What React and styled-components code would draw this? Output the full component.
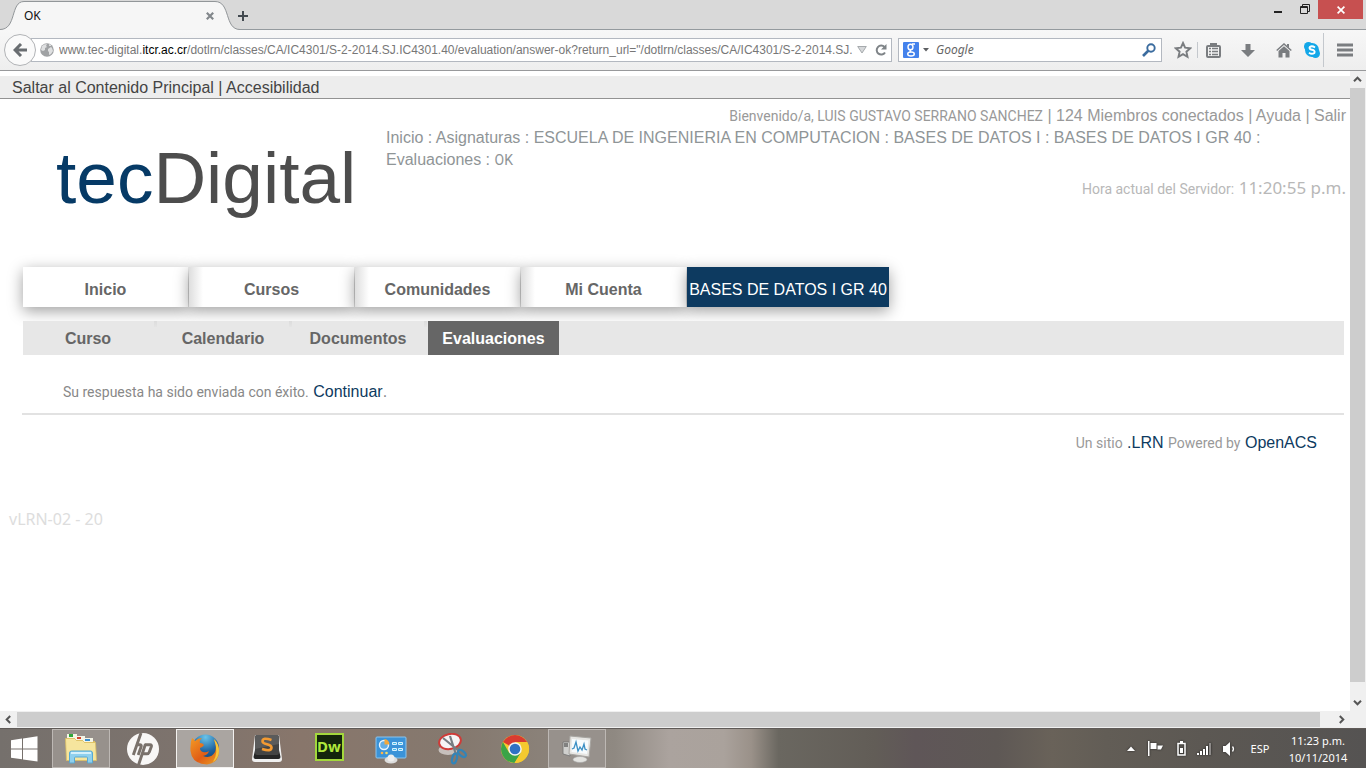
import React, { useState } from 'react';
import styled, { createGlobalStyle } from 'styled-components';

const GlobalStyle = createGlobalStyle`
  * { box-sizing: border-box; }
  html, body, #root { height: 100%; margin: 0; }
  body { overflow: hidden; background: #fff; }
  button { font: inherit; color: inherit; border: 0; padding: 0; margin: 0; background: none; }
  svg { display: block; flex: none; }
`;

const ui = `'Noto Sans', 'Open Sans', sans-serif`;
const arial = `'Liberation Sans', Arial, sans-serif`;
const tahoma = `'Noto Sans', Tahoma, sans-serif`;

const Desktop = styled.div`
  display: flex;
  flex-direction: column;
  height: 100vh;
  font-family: ${arial};
`;

/* ---------- window frame ---------- */
const TitleBar = styled.div`
  display: flex;
  justify-content: space-between;
  height: 30px;
  flex: none;
  background: #d9d9d9;
  border-bottom: 1px solid #949a9e;
`;
const TabStrip = styled.div`
  display: flex;
`;
const Tab = styled.div`
  position: relative;
  width: 240px;
  height: 30px;
  display: flex;
  align-items: center;
  justify-content: space-between;
  padding: 2px 24px 0;
  font: 12px/16px ${ui};
  color: #111;
`;
const TabShape = styled.svg`
  position: absolute;
  inset: 0;
`;
const TabTitle = styled.span`
  position: relative;
`;
const IconButton = styled.button`
  position: relative;
  display: flex;
  align-items: center;
  justify-content: center;
  flex: none;
  width: ${p => p.$w || 24}px;
  height: ${p => p.$h || 24}px;
  color: ${p => p.$color || '#7a7d80'};
`;
const WindowButtons = styled.div`
  display: flex;
  align-items: flex-start;
  padding-right: 3px;
`;
const CloseWindow = styled.button`
  display: flex;
  align-items: center;
  justify-content: center;
  width: 45px;
  height: 19px;
  background: #c75050;
`;

/* ---------- navigation toolbar ---------- */
const Toolbar = styled.div`
  display: flex;
  align-items: center;
  height: 41px;
  flex: none;
  padding: 0 0 0 4px;
  background: linear-gradient(#f7f7f7, #eeeeee);
  border-bottom: 1px solid #98999b;
`;
const BackButton = styled.button`
  position: relative;
  z-index: 1;
  display: flex;
  align-items: center;
  justify-content: center;
  width: 32px;
  height: 32px;
  flex: none;
  border: 1px solid #b1b3b6;
  border-radius: 50%;
  background: #fafafa;
`;
const Field = styled.div`
  display: flex;
  align-items: center;
  height: 24px;
  border: 1px solid #b3b8c0;
  background: #fff;
`;
const UrlField = styled(Field)`
  flex: 1;
  min-width: 0;
  margin-left: -5px;
  margin-right: 6px;
  padding-left: 8px;
`;
const SearchField = styled(Field)`
  width: 264px;
  flex: none;
  padding: 0 4px;
`;
const UrlText = styled.div`
  position: relative;
  flex: 1;
  min-width: 0;
  margin-left: 5px;
  height: 20px;
  font: 12px/20px ${arial};
`;
const UrlInput = styled.input`
  display: block;
  width: 100%;
  height: 20px;
  padding: 0;
  border: 0;
  outline: 0;
  background: transparent;
  font: inherit;
  color: #333;
`;
const UrlDisplay = styled.span`
  position: absolute;
  inset: 0;
  overflow: hidden;
  white-space: nowrap;
  pointer-events: none;
  color: #777;
`;
const UrlHost = styled.span`
  color: #000;
`;
const SearchInput = styled.input`
  flex: 1;
  min-width: 0;
  height: 20px;
  padding: 0 0 0 4px;
  border: 0;
  outline: 0;
  background: transparent;
  font: italic 12px/20px ${ui};
  &::placeholder { color: #666; opacity: 1; }
`;
const ToolGroup = styled.div`
  display: flex;
  align-items: center;
  height: 40px;
  flex: none;
  padding-left: 7px;
`;
const ToolDivider = styled.span`
  width: 1px;
  height: ${p => (p.$tall ? 34 : 16)}px;
  background: #c4c8cd;
`;

/* ---------- scrolling viewport ---------- */
const Viewport = styled.div`
  flex: 1;
  min-height: 0;
  display: grid;
  grid-template-columns: minmax(0, 1fr) 16px;
  grid-template-rows: minmax(0, 1fr) 17px;
`;
const Page = styled.div`
  overflow: hidden;
  background: #fff;
  padding-top: 5px;
`;
const ScrollBar = styled.div`
  display: flex;
  flex-direction: ${p => (p.$vertical ? 'column' : 'row')};
  background: #f0f0f0;
  padding: ${p => (p.$vertical ? '0 1px 0 0' : '1px 0')};
`;
const ScrollArrow = styled.button`
  display: flex;
  align-items: center;
  justify-content: center;
  width: ${p => (p.$vertical ? 15 : 17)}px;
  height: ${p => (p.$vertical ? 17 : 15)}px;
  flex: none;
`;
const ScrollTrack = styled.div`
  flex: 1;
  display: flex;
  flex-direction: ${p => (p.$vertical ? 'column' : 'row')};
`;
const ScrollThumb = styled.div`
  flex: 0 0 ${p => p.$size};
  background: #cdcdcd;
`;
const ScrollCorner = styled.div`
  background: #f0f0f0;
`;

/* ---------- web page ---------- */
const Skip = styled.nav`
  height: 23px;
  padding: 1px 0 0 12px;
  background: #ededed;
  border-bottom: 1px solid #929292;
  font: 16px/22px ${arial};
  color: #444;
`;
const PlainLink = styled.a`
  color: inherit;
  text-decoration: none;
`;
const BlueLink = styled.a`
  color: #0d3a60;
  text-decoration: none;
  font: 16px/22px ${arial};
`;
const Small = styled.span`
  font-family: Roboto, ${tahoma};
  font-size: 14px;
`;
const Header = styled.header`
  display: grid;
  grid-template-columns: 386px minmax(0, 1fr);
  height: 168px;
  padding-top: 6px;
  color: #999;
  font: 16px/22px ${arial};
`;
const Logo = styled.div`
  padding: 14px 0 0 56px;
  font: 73px/118px ${arial};
  white-space: nowrap;
  color: #4d4d4d;
`;
const LogoAccent = styled.span`
  color: #063a66;
`;
const HeaderText = styled.div`
  padding-right: 4px;
`;
const UserLine = styled.div`
  text-align: right;
  white-space: nowrap;
`;
const Crumbs = styled.nav`
  color: #8f9597;
  padding-right: 60px;
`;
const ServerTime = styled.div`
  margin-top: 6px;
  text-align: right;
  color: #b8b8b8;
`;
const Clock = styled.span`
  font: 17px/22px ${tahoma};
`;
const MainNav = styled.nav`
  display: flex;
  margin-left: 23px;
  gap: 1px;
`;
const NavItem = styled.a`
  display: flex;
  align-items: center;
  justify-content: center;
  min-width: ${p => (p.$active ? 202 : 165)}px;
  height: 40px;
  padding-top: 6px;
  background: ${p => (p.$active ? '#0d3a60' : p.$first ? '#fff' : 'linear-gradient(90deg, #dedede, #fff 14px)')};
  color: ${p => (p.$active ? '#fff' : '#666')};
  font: ${p => (p.$active ? 'normal' : 'bold')} 16px/22px ${arial};
  text-decoration: none;
  white-space: nowrap;
  box-shadow: 0 4px 15px rgba(0, 0, 0, 0.38);
`;
const SubNav = styled.nav`
  position: relative;
  display: flex;
  height: 34px;
  margin: 14px 6px 0 23px;
  background: #e7e7e7;
`;
const SubItem = styled.a`
  display: flex;
  align-items: center;
  justify-content: center;
  width: ${p => (p.$active ? 131 : 135)}px;
  padding-top: 2px;
  padding-right: ${p => (p.$active ? 0 : 5)}px;
  background: ${p => (p.$active ? '#666' : 'linear-gradient(#dcdcdc, #e4e4e4) right 1px top / 3px 6px no-repeat')};
  color: ${p => (p.$active ? '#fff' : '#666')};
  font: bold 16px/22px ${arial};
  text-decoration: none;
`;
const Content = styled.main`
  margin: 0 6px 0 22px;
  padding: 26px 0 10px 41px;
  border-bottom: 2px solid #e2e2e2;
  color: #888;
  line-height: 22px;
`;
const Footer = styled.footer`
  padding: 17px 33px 0 0;
  text-align: right;
  color: #999;
  line-height: 22px;
`;
const Version = styled.div`
  margin-top: 54px;
  padding-left: 9px;
  font: 16px/22px ${tahoma};
  color: #ddd;
`;

/* ---------- taskbar ---------- */
const Taskbar = styled.div`
  display: flex;
  align-items: stretch;
  justify-content: space-between;
  height: 40px;
  flex: none;
  border-top: 1px solid #5f5a57;
  background: linear-gradient(90deg, #75706c 0%, #7d736d 13%, #88766b 22%, #85796f 34%, #8f8982 45%, #aba39e 49%, #aaa29c 53%, #9a9189 55%, #6a6760 57%, #625d57 64%, #5f5658 67%, #5e5855 73%, #696259 77%, #625d56 81%, #5c5853 88%, #555352 100%);
  color: #fff;
`;
const Apps = styled.div`
  display: flex;
  gap: 4px;
`;
const AppButton = styled.button`
  display: flex;
  align-items: center;
  justify-content: center;
  width: ${p => (p.$start ? 48 : 58)}px;
  height: 39px;
  border: 1px solid ${p => (p.$state === 'active' ? '#f3f1ef' : p.$state === 'open' ? '#bdb8b4' : 'transparent')};
  background: ${p => (p.$state === 'active' ? '#aaa5a1' : p.$state === 'open' ? '#97918c' : 'transparent')};
`;
const Tray = styled.div`
  display: flex;
  align-items: center;
  padding-right: 18px;
  font: 11px/17px ${ui};
  svg { filter: drop-shadow(0 0 1px #222); }
`;
const Lang = styled.button`
  width: 32px;
  margin-right: 12px;
`;
const DateTime = styled.div`
  width: 60px;
  text-align: center;
  white-space: nowrap;
`;

const Chevron = ({ turn }) => (
  <svg width="9" height="9" viewBox="0 0 9 9">
    <path d="M1 6.2 4.5 2.7 8 6.2" fill="none" stroke="#555" strokeWidth="2" transform={`rotate(${turn} 4.5 4.5)`} />
  </svg>
);

const StartIcon = () => (
  <svg width="28" height="26" viewBox="0 0 28 26" fill="#fff">
    <path d="M1 4.2 12 2.6V12.400H1zM13 2.400 27.500.3V12.400H13zM1 13.400H12V23.200L1 21.700zM13 13.400H27.500V25.500L13 23.400z" />
  </svg>
);
const ExplorerIcon = () => (
  <svg width="34" height="32" viewBox="0 0 34 32">
    <path d="M3 2h9l1 3h8l1 3h9v19H3z" fill="#ddbd62" />
    <path d="M3 1h10v4H3z" fill="#f5f5e6" /><path d="M5 1h4v3H5z" fill="#2fa73a" />
    <path d="M11 3h10v4H11z" fill="#f5f5e6" /><path d="M13 4h4v2h-4z" fill="#d2452d" />
    <path d="M19 5h10v4H19z" fill="#f5f5e6" /><path d="M21 6h5v2h-5z" fill="#3a8fd0" />
    <path d="M1.500 5.500h9l2 2h6l2 2h11l1 18h-30z" fill="#f6e59e" stroke="#dcbf62" strokeWidth=".8" />
    <path d="M5.500 30V20q0-2 2-2h19q2 0 2 2v10h-5v-5q0-1-1-1h-11q-1 0-1 1v5z" fill="#8fd0ee" stroke="#58a9d2" />
    <path d="M7 19h20v2H7z" fill="#d4f0fb" />
  </svg>
);
const HpIcon = () => (
  <svg width="32" height="32" viewBox="0 0 32 32">
    <circle cx="16" cy="16" r="16" fill="#f8f7f6" />
    <g fill="none" stroke="#79716b" strokeWidth="2.900">
      <path d="M14 0 6.300 22M9.800 11.700h3q2 0 1.300 2L11.200 22" />
      <path d="M18.500 11 11.500 32M18 11.700h5q2 0 1.300 2L22.300 19q-.7 1.800-2.300 1.800h-4" />
    </g>
  </svg>
);
const FirefoxIcon = () => (
  <svg width="32" height="32" viewBox="0 0 32 32">
    <defs>
      <radialGradient id="ffGlobe" cx=".5" cy=".1" r=".9"><stop offset="0" stopColor="#6ac4ea" /><stop offset=".6" stopColor="#1d62a0" /><stop offset="1" stopColor="#12406f" /></radialGradient>
      <linearGradient id="ffFox" x1="0" y1="0" x2="1" y2="1"><stop offset="0" stopColor="#f39a25" /><stop offset=".55" stopColor="#e05d16" /><stop offset="1" stopColor="#e9a024" /></linearGradient>
    </defs>
    <circle cx="16.500" cy="15" r="13.500" fill="url(#ffGlobe)" />
    <path d="M3 5q2 1 3 3 3-3 7-3-3 2-2 5 3 0 4 2-1 2-4 3 0 3 3 4 3 1 6-1-1 4-6 5 8 3 12-4 2-5-1-13 5 5 5 12 0 12-12 13.500Q3 31 1.500 18 1 10 3 5z" fill="url(#ffFox)" />
    <path d="M25 6q5 5 5 12 0 7-6 11 6-9 1-23z" fill="#f6c63a" />
  </svg>
);
const SublimeIcon = () => (
  <svg width="32" height="30" viewBox="0 0 32 30">
    <path d="M4 1 1 25q0 3 3 3h24q3 0 3-3L28 1z" fill="#f0f0f0" />
    <path d="M4 16 2.500 23q0 2 2 2h23q2 0 2-2L28 16z" fill="#262626" />
    <rect x="4" y="1" width="24" height="20" rx="2" fill="#444" />
    <path d="M4 3q0-2 2-2h20q2 0 2 2v7L4 15z" fill="#5b5b5b" />
    <path d="M20.500 6q-9-3-9 1.200 0 2 4.500 3t4.500 3.300q0 4.500-9.500 1.500" fill="none" stroke="#f39a32" strokeWidth="2.600" />
  </svg>
);
const DwBadge = styled.span`
  display: flex;
  align-items: center;
  justify-content: center;
  width: 29px;
  height: 28px;
  padding-bottom: 2px;
  margin-bottom: 4px;
  border: 2px solid #a3d83c;
  background: #14260c;
  color: #b0e83c;
  font: bold 15px/20px ${ui};
`;
const PanelIcon = () => (
  <svg width="32" height="30" viewBox="0 0 32 30">
    <rect x="1" y="3" width="30" height="21" rx="1" fill="#3b93d8" stroke="#8cc5ee" />
    <circle cx="9" cy="11" r="4.500" fill="#62aee6" stroke="#e8f5ff" strokeWidth="1.400" />
    <path d="M9.500 10.500V5a5.500 5.500 0 0 1 5 5.500z" fill="#f2a83b" />
    <circle cx="7" cy="19" r="1.300" fill="#ffb449" /><circle cx="11.500" cy="19" r="1.300" fill="#f5dc6a" />
    <path d="M17.500 8.500h4v2h-4zM23.500 8.500h4v2h-4zM17.500 14.500h4v2h-4zM23.500 14.500h4v2h-4z" fill="#45bfe9" stroke="#d9f1ff" />
    <ellipse cx="16" cy="26" rx="6.500" ry="3.500" fill="#ddd" /><circle cx="16" cy="24" r="3.500" fill="#eee" />
  </svg>
);
const SnipIcon = () => (
  <svg width="32" height="32" viewBox="0 0 32 32">
    <ellipse cx="11" cy="17" rx="9.500" ry="5" fill="#c7c0bc" />
    <ellipse cx="13" cy="8.500" rx="11" ry="7.500" fill="#f6f4f5" stroke="#cf3b38" strokeWidth="2" transform="rotate(-12 13 8.500)" />
    <path d="M6 5 22 18M13 3 18.500 20" stroke="#777c82" strokeWidth="2.200" />
    <ellipse cx="25" cy="20.500" rx="2.500" ry="4.500" fill="none" stroke="#3284b8" strokeWidth="2.200" transform="rotate(-50 25 20.500)" />
    <ellipse cx="17.500" cy="25.500" rx="2.300" ry="5" fill="none" stroke="#3284b8" strokeWidth="2.200" transform="rotate(14 17.500 25.500)" />
  </svg>
);
const ChromeIcon = () => (
  <svg width="30" height="30" viewBox="0 0 30 30">
    <circle cx="15" cy="15" r="14" fill="#f5c92f" />
    <path d="M15 15 2.900 8A14 14 0 0 1 27.100 8H15z" fill="#d93b30" />
    <path d="M2.900 8A14 14 0 0 0 14.500 29L21 18.500 9 18.500z" fill="#3ba448" />
    <path d="M15 8h12.100A14 14 0 0 1 14.500 29L21 18.500z" fill="#f5c92f" />
    <circle cx="15" cy="15" r="6.800" fill="#f4f4f2" /><circle cx="15" cy="15" r="5.300" fill="#2f71c4" />
  </svg>
);
const MonitorIcon = () => (
  <svg width="32" height="30" viewBox="0 0 32 30">
    <path d="M2 8h7v14l-7-2z" fill="#d0d0ce" stroke="#727272" strokeWidth=".8" /><path d="M3 10h4M3 12h4" stroke="#333" />
    <path d="M9 2 30 4 28 23 8 20z" fill="#e7e6e3" stroke="#a7a5a1" />
    <path d="M11 5 27.500 6.500 26 20 10.500 18z" fill="#f7fbfd" />
    <path d="m11 15 2-1 2-6 2 9 2-4 2 3 2-6 1 5 2 1" fill="none" stroke="#3b8fc4" strokeWidth="1.300" />
    <ellipse cx="19" cy="25.500" rx="7" ry="3" fill="#e3e3e0" stroke="#aaa" strokeWidth=".6" />
  </svg>
);

const apps = [
  { name: 'Explorador', icon: ExplorerIcon, state: 'open' },
  { name: 'HP', icon: HpIcon },
  { name: 'Firefox', icon: FirefoxIcon, state: 'active' },
  { name: 'Sublime Text', icon: SublimeIcon },
  { name: 'Dreamweaver', icon: () => <DwBadge>Dw</DwBadge> },
  { name: 'Panel de control', icon: PanelIcon },
  { name: 'Recortes', icon: SnipIcon },
  { name: 'Chrome', icon: ChromeIcon },
  { name: 'Administrador de tareas', icon: MonitorIcon, state: 'open' },
];

const host = 'itcr.ac.cr';
const before = 'www.tec-digital.';
const after = '/dotlrn/classes/CA/IC4301/S-2-2014.SJ.IC4301.40/evaluation/answer-ok?return_url="/dotlrn/classes/CA/IC4301/S-2-2014.SJ.IC';

function AddressBar() {
  const [editing, setEditing] = useState(false);
  const [url, setUrl] = useState(before + host + after);
  return (
    <UrlText>
      <UrlInput
        aria-label="Dirección"
        value={editing ? url : ''}
        onChange={e => setUrl(e.target.value)}
        onFocus={() => setEditing(true)}
        onBlur={() => setEditing(false)}
      />
      {!editing && <UrlDisplay>{before}<UrlHost>{host}</UrlHost>{after}</UrlDisplay>}
    </UrlText>
  );
}

function BrowserChrome() {
  return (
    <>
      <TitleBar>
        <TabStrip>
          <Tab>
            <TabShape width="240" height="30" viewBox="0 0 240 30">
              <path d="M0 29.500C17 29.500 10 1.500 24 1.500H215C231 1.500 224 29.500 240 29.500V30H0z" fill="#f6f6f6" />
              <path d="M0 29.500C17 29.500 10 1.500 24 1.500H215C231 1.500 224 29.500 240 29.500" fill="none" stroke="#929699" />
            </TabShape>
            <TabTitle>OK</TabTitle>
            <IconButton $w={12} $h={16} aria-label="Cerrar pestaña">
              <svg width="8" height="8" viewBox="0 0 8 8"><path d="m.8.8 6.400 6.400M7.200.8.8 7.200" stroke="#82878b" strokeWidth="2.200" /></svg>
            </IconButton>
          </Tab>
          <IconButton $w={6} $h={32} aria-label="Nueva pestaña">
            <svg width="10" height="10" viewBox="0 0 10 10"><path d="M5 0v10M0 5h10" stroke="#434a50" strokeWidth="2" /></svg>
          </IconButton>
        </TabStrip>
        <WindowButtons>
          <IconButton $w={26} $h={20} aria-label="Minimizar">
            <svg width="8" height="8" viewBox="0 0 8 8"><path d="M0 6h8" stroke="#222" strokeWidth="2" /></svg>
          </IconButton>
          <IconButton $w={27} $h={18} aria-label="Restaurar">
            <svg width="10" height="10" viewBox="0 0 10 10" fill="none" stroke="#222"><path d="M2.500 2V.5h7v7H8" /><path d="M.5 2.500h7v7h-7zM.5 3.500h7" /></svg>
          </IconButton>
          <CloseWindow aria-label="Cerrar">
            <svg width="8" height="8" viewBox="0 0 8 8"><path d="m.6.6 6.800 6.800M7.400.6.6 7.400" stroke="#fff" strokeWidth="1.700" /></svg>
          </CloseWindow>
        </WindowButtons>
      </TitleBar>
      <Toolbar>
        <BackButton aria-label="Atrás">
          <svg width="14" height="14" viewBox="0 0 14 14"><path d="M8 1 2 7l6 6M2 7h12" fill="none" stroke="#696d71" strokeWidth="3" /></svg>
        </BackButton>
        <UrlField>
          <svg width="14" height="14" viewBox="0 0 14 14">
            <circle cx="7" cy="7" r="6.800" fill="#a0a2a4" />
            <path d="M2 3q2-2 5-2L6 3 7 4 5 5v2L3 8 1 7zM8 6l3-2 1 1 1 3-2 3-2 1V9L8 8zM9 1l2 1v1H9z" fill="#dfe0e1" />
          </svg>
          <AddressBar />
          <IconButton $w={18} $h={20} aria-label="Historial">
            <svg width="10" height="8" viewBox="0 0 10 8"><path d="M.7.5h8.600L5 7z" fill="#d6d8da" stroke="#a6aaad" /></svg>
          </IconButton>
          <IconButton $w={20} $h={20} $color="#7f8488" aria-label="Recargar">
            <svg width="12" height="12" viewBox="0 0 12 12"><path d="M10 8.500A4.500 4.500 0 1 1 9.500 3" fill="none" stroke="currentColor" strokeWidth="2" /><path d="M11.500 0v5.500H6z" fill="currentColor" /></svg>
          </IconButton>
        </UrlField>
        <SearchField>
          <svg width="16" height="16" viewBox="0 0 16 16">
            <rect width="16" height="16" rx="1" fill="#4482ec" />
            <g fill="none" stroke="#fff" strokeWidth="1.400"><ellipse cx="7.500" cy="5" rx="2.500" ry="2.800" /><path d="M9 2h3M8 8q-2 1 0 2" /><ellipse cx="8" cy="12" rx="3.300" ry="2" /></g>
          </svg>
          <IconButton $w={13} $h={20} aria-label="Buscador">
            <svg width="6" height="4" viewBox="0 0 6 4"><path d="M0 0h6L3 3.500z" fill="#5c5f62" /></svg>
          </IconButton>
          <SearchInput aria-label="Buscar" placeholder="Google" />
          <IconButton $w={16} $h={20} $color="#3b6c9f" aria-label="Buscar">
            <svg width="14" height="14" viewBox="0 0 14 14" fill="none" stroke="currentColor"><circle cx="9" cy="5" r="3.700" strokeWidth="1.900" /><path d="M6.500 7.500 1 13" strokeWidth="2.600" /></svg>
          </IconButton>
        </SearchField>
        <ToolGroup>
          <IconButton $w={28} aria-label="Marcador">
            <svg width="18" height="18" viewBox="0 0 18 18"><path d="m9 2 2.100 4.700 5.200.5-3.900 3.500 1.100 5.100L9 13.200l-4.500 2.600 1.100-5.100-3.900-3.500 5.200-.5z" fill="none" stroke="currentColor" strokeWidth="1.900" /></svg>
          </IconButton>
          <ToolDivider />
          <IconButton $w={31} aria-label="Lista de marcadores">
            <svg width="15" height="15" viewBox="0 0 15 15"><rect x="1" y="3" width="13" height="11" rx="1" fill="none" stroke="currentColor" strokeWidth="2" /><path d="M4 0h7v3H4z" fill="currentColor" /><path d="M3 5.500h2m1 0h6M3 8.500h2m1 0h6M3 11.500h2m1 0h6" fill="none" stroke="currentColor" strokeWidth="1.400" /></svg>
          </IconButton>
          <IconButton $w={38} aria-label="Descargas">
            <svg width="14" height="15" viewBox="0 0 14 15"><path d="M4.500 1h5v6H14l-7 7-7-7h4.500z" fill="currentColor" /></svg>
          </IconButton>
          <IconButton $w={34} aria-label="Inicio">
            <svg width="16" height="15" viewBox="0 0 16 15"><path d="M.7 7.500 8 1l7.300 6.500" fill="none" stroke="currentColor" strokeWidth="1.500" /><path d="M2.500 8 8 3.200 13.500 8v6.500h-4V10h-3v4.500h-4zM11 1h2v4l-2-2z" fill="currentColor" /></svg>
          </IconButton>
          <IconButton $w={22} aria-label="Skype">
            <svg width="16" height="16" viewBox="0 0 16 16"><circle cx="8" cy="8" r="7" fill="#13a7e8" /><circle cx="4.500" cy="4.500" r="4.500" fill="#13a7e8" /><circle cx="11.500" cy="11.500" r="4.500" fill="#13a7e8" /><path d="M11 5.500Q8 3.400 5.900 4.900 4.500 7 8 7.800t2.400 3.100Q8 12.800 5 10.800" fill="none" stroke="#fff" strokeWidth="1.900" /></svg>
          </IconButton>
          <ToolDivider $tall />
          <IconButton $w={42} aria-label="Menú">
            <svg width="16" height="14" viewBox="0 0 16 14"><path d="M0 2h16M0 7h16M0 12h16" stroke="currentColor" strokeWidth="3" /></svg>
          </IconButton>
        </ToolGroup>
      </Toolbar>
    </>
  );
}

function WebPage() {
  return (
    <Page>
      <Skip>
        <PlainLink href="#contenido">Saltar al Contenido Principal</PlainLink> | <PlainLink href="#accesibilidad">Accesibilidad</PlainLink>
      </Skip>
      <Header>
        <Logo><LogoAccent>tec</LogoAccent>Digital</Logo>
        <HeaderText>
          <UserLine>
            <Small>Bienvenido/a, LUIS GUSTAVO SERRANO SANCHEZ</Small> | <PlainLink href="#miembros">124 Miembros conectados</PlainLink> | <PlainLink href="#ayuda">Ayuda</PlainLink> | <PlainLink href="#salir">Salir</PlainLink>
          </UserLine>
          <Crumbs>
            <PlainLink href="#inicio">Inicio</PlainLink> : <PlainLink href="#asignaturas">Asignaturas</PlainLink> : <PlainLink href="#escuela">ESCUELA DE INGENIERIA EN COMPUTACION</PlainLink> : <PlainLink href="#bases">BASES DE DATOS I</PlainLink> : <PlainLink href="#grupo">BASES DE DATOS I GR 40</PlainLink> : <PlainLink href="#evaluaciones">Evaluaciones</PlainLink> : <Small>OK</Small>
          </Crumbs>
          <ServerTime><Small>Hora actual del Servidor:</Small> <Clock>11:20:55 p.m.</Clock></ServerTime>
        </HeaderText>
      </Header>
      <MainNav>
        <NavItem href="#inicio" $first>Inicio</NavItem>
        <NavItem href="#cursos">Cursos</NavItem>
        <NavItem href="#comunidades">Comunidades</NavItem>
        <NavItem href="#cuenta">Mi Cuenta</NavItem>
        <NavItem href="#grupo" $active>BASES DE DATOS I GR 40</NavItem>
      </MainNav>
      <SubNav>
        <SubItem href="#curso">Curso</SubItem>
        <SubItem href="#calendario">Calendario</SubItem>
        <SubItem href="#documentos">Documentos</SubItem>
        <SubItem href="#evaluaciones" $active>Evaluaciones</SubItem>
      </SubNav>
      <Content id="contenido">
        <Small>Su respuesta ha sido enviada con éxito.</Small> <BlueLink href="#continuar">Continuar</BlueLink>.
      </Content>
      <Footer>
        <Small>Un sitio</Small> <BlueLink href="#lrn">.LRN</BlueLink> <Small>Powered by</Small> <BlueLink href="#openacs">OpenACS</BlueLink>
      </Footer>
      <Version>vLRN-02 - 20</Version>
    </Page>
  );
}

export default function App() {
  return (
    <Desktop>
      <GlobalStyle />
      <BrowserChrome />
      <Viewport>
        <WebPage />
        <ScrollBar $vertical>
          <ScrollArrow $vertical aria-label="Subir"><Chevron turn={0} /></ScrollArrow>
          <ScrollTrack $vertical><ScrollThumb $size="98%" /></ScrollTrack>
          <ScrollArrow $vertical aria-label="Bajar"><Chevron turn={180} /></ScrollArrow>
        </ScrollBar>
        <ScrollBar>
          <ScrollArrow aria-label="Izquierda"><Chevron turn={270} /></ScrollArrow>
          <ScrollTrack><ScrollThumb $size="99%" /></ScrollTrack>
          <ScrollArrow aria-label="Derecha"><Chevron turn={90} /></ScrollArrow>
        </ScrollBar>
        <ScrollCorner />
      </Viewport>
      <Taskbar>
        <Apps>
          <AppButton $start aria-label="Inicio de Windows"><StartIcon /></AppButton>
          {apps.map(({ name, icon: Icon, state }) => (
            <AppButton key={name} $state={state} aria-label={name}><Icon /></AppButton>
          ))}
        </Apps>
        <Tray>
          <IconButton $w={22} aria-label="Mostrar iconos ocultos">
            <svg width="8" height="5" viewBox="0 0 8 5"><path d="M0 5 4 .5 8 5z" fill="#fff" /></svg>
          </IconButton>
          <IconButton $w={26} aria-label="Centro de actividades">
            <svg width="15" height="15" viewBox="0 0 15 15" fill="#fff"><path d="M0 0h1.500v15H0zM2.500 2h6v6h-6zM9.500 4.500H15q-1 2-2 4H9.500z" /></svg>
          </IconButton>
          <IconButton $w={26} aria-label="Batería">
            <svg width="9" height="15" viewBox="0 0 9 15"><path d="M3 0h3v2H3z" fill="#fff" /><path d="M1 2.500h7v11.500H1z" fill="none" stroke="#fff" strokeWidth="1.500" /><path d="M3 7h3v5H3z" fill="#fff" /></svg>
          </IconButton>
          <IconButton $w={20} aria-label="Red">
            <svg width="15" height="12" viewBox="0 0 15 12"><path d="M0 10h2v2H0zM3 8h2v4H3zM6 6h2v6H6zM9 3h2v9H9z" fill="#fff" /><path d="M12 0h2v12h-2z" fill="#8e8b89" /></svg>
          </IconButton>
          <IconButton $w={30} aria-label="Volumen">
            <svg width="13" height="14" viewBox="0 0 13 14"><path d="M0 4h2.500L7 0v14L2.500 10H0z" fill="#fff" /><path d="M9.500 4.500q2 2.500 0 5" fill="none" stroke="#fff" strokeWidth="1.300" /></svg>
          </IconButton>
          <Lang>ESP</Lang>
          <DateTime>11:23 p.m.<br />10/11/2014</DateTime>
        </Tray>
      </Taskbar>
    </Desktop>
  );
}
